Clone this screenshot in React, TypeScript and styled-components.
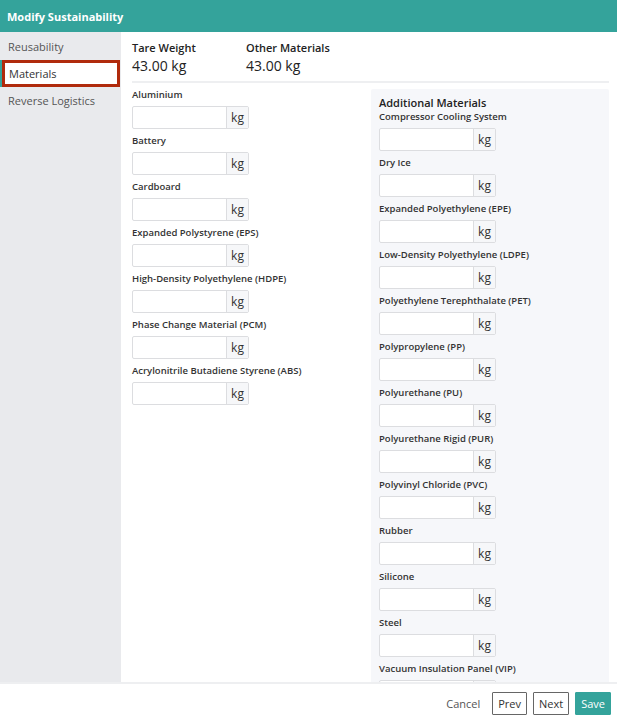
import styled, { createGlobalStyle } from "styled-components";

const GlobalStyle = createGlobalStyle`
  html, body {
    margin: 0;
    padding: 0;
    background: #fff;
  }
  body {
    font-family: "Open Sans", "Noto Sans", sans-serif;
    color: #333;
  }
  * {
    box-sizing: border-box;
  }
`;

const mainMaterials = [
  "Aluminium",
  "Battery",
  "Cardboard",
  "Expanded Polystyrene (EPS)",
  "High-Density Polyethylene (HDPE)",
  "Phase Change Material (PCM)",
  "Acrylonitrile Butadiene Styrene (ABS)",
];

const additionalMaterials = [
  "Compressor Cooling System",
  "Dry Ice",
  "Expanded Polyethylene (EPE)",
  "Low-Density Polyethylene (LDPE)",
  "Polyethylene Terephthalate (PET)",
  "Polypropylene (PP)",
  "Polyurethane (PU)",
  "Polyurethane Rigid (PUR)",
  "Polyvinyl Chloride (PVC)",
  "Rubber",
  "Silicone",
  "Steel",
  "Vacuum Insulation Panel (VIP)",
];

const navItems = ["Reusability", "Materials", "Reverse Logistics"];

function WeightField({ label }: { label: string }) {
  return (
    <Field>
      <span className="label">{label}</span>
      <InputGroup>
        <input type="text" />
        <span className="addon">kg</span>
      </InputGroup>
    </Field>
  );
}

export default function App() {
  return (
    <Modal>
      <GlobalStyle />
      <Header>Modify Sustainability</Header>
      <Body>
        <Sidebar>
          {navItems.map((item) => (
            <NavItem key={item} $active={item === "Materials"}>
              {item}
            </NavItem>
          ))}
        </Sidebar>
        <Content>
          <Summary>
            <div className="stat">
              <span className="stat-label">Tare Weight</span>
              <span className="stat-value">43.00 kg</span>
            </div>
            <div className="stat">
              <span className="stat-label">Other Materials</span>
              <span className="stat-value">43.00 kg</span>
            </div>
          </Summary>
          <Columns>
            <Column>
              {mainMaterials.map((m) => (
                <WeightField key={m} label={m} />
              ))}
            </Column>
            <Panel>
              <h3>Additional Materials</h3>
              {additionalMaterials.map((m) => (
                <WeightField key={m} label={m} />
              ))}
            </Panel>
          </Columns>
        </Content>
      </Body>
      <Footer>
        <LinkButton>Cancel</LinkButton>
        <Button>Prev</Button>
        <Button>Next</Button>
        <Button $primary>Save</Button>
      </Footer>
    </Modal>
  );
}

const Modal = styled.div`
  display: flex;
  flex-direction: column;
  width: 617px;
  height: 722px;
  overflow: hidden;
`;

const Header = styled.div`
  display: flex;
  align-items: center;
  height: 32px;
  padding: 0 7px;
  background: #34a39b;
  color: #fff;
  font-size: 11px;
  font-weight: 700;
`;

const Body = styled.div`
  display: flex;
  flex: 1;
  min-height: 0;
`;

const Sidebar = styled.div`
  width: 121px;
  flex-shrink: 0;
  padding-top: 1px;
  background: #e9eaed;
`;

const NavItem = styled.div<{ $active?: boolean }>`
  display: flex;
  align-items: center;
  height: 27px;
  padding-left: 8px;
  font-size: 11px;
  color: #555;

  ${({ $active }) =>
    $active &&
    `
    position: relative;
    margin-left: 2px;
    margin-right: 1px;
    padding-left: 4px;
    background: #fff;
    color: #333;
    border: 3px solid #b02a0c;

    &::before {
      content: "";
      position: absolute;
      left: -5px;
      top: -3px;
      bottom: -3px;
      width: 2px;
      background: #34a39b;
    }
  `}
`;

const Content = styled.div`
  flex: 1;
  min-width: 0;
  padding: 8px 8px 0 11px;
  overflow: hidden;
`;

const Summary = styled.div`
  display: flex;
  padding-bottom: 4px;
  border-bottom: 2px solid #eeeff1;

  .stat {
    display: flex;
    flex-direction: column;
    width: 114px;
  }

  .stat-label {
    font-size: 11px;
    font-weight: 600;
    line-height: 15px;
    color: #222;
  }

  .stat-value {
    font-size: 14px;
    line-height: 22px;
    color: #222;
  }
`;

const Columns = styled.div`
  display: flex;
  margin-top: 6px;
`;

const Column = styled.div`
  width: 239px;
  flex-shrink: 0;
`;

const Panel = styled.div`
  flex: 1;
  padding: 5px 8px 0;
  background: #f6f7fa;
  border-radius: 2px;

  h3 {
    margin: 0;
    font-size: 11px;
    font-weight: 600;
    line-height: 17px;
    color: #222;
  }
`;

const Field = styled.div`
  display: flex;
  flex-direction: column;
  align-items: flex-start;
  margin-bottom: 6px;

  .label {
    font-size: 9.5px;
    font-weight: 600;
    line-height: 12px;
    margin-bottom: 5px;
    color: #333;
  }
`;

const InputGroup = styled.div`
  display: flex;
  width: 117px;
  height: 23px;
  border: 1px solid #dcdde0;
  border-radius: 2px;
  background: #fff;

  input {
    flex: 1;
    min-width: 0;
    border: none;
    outline: none;
    background: transparent;
  }

  .addon {
    display: flex;
    align-items: center;
    justify-content: center;
    width: 22px;
    border-left: 1px solid #dcdde0;
    background: #f6f7f9;
    font-size: 12px;
    color: #333;
  }
`;

const Footer = styled.div`
  display: flex;
  align-items: center;
  justify-content: flex-end;
  gap: 6px;
  height: 40px;
  padding: 0 6px 0 0;
  border-top: 2px solid #eeeff1;
  background: #fff;
`;

const LinkButton = styled.span`
  margin-right: 6px;
  font-size: 11px;
  color: #555;
`;

const Button = styled.button<{ $primary?: boolean }>`
  height: 23px;
  padding: 0 5px;
  border: 1px solid ${({ $primary }) => ($primary ? "#34a39b" : "#666")};
  border-radius: 1px;
  background: ${({ $primary }) => ($primary ? "#34a39b" : "#fff")};
  color: ${({ $primary }) => ($primary ? "#fff" : "#333")};
  font-family: "Open Sans", "Noto Sans", sans-serif;
  font-size: 11px;
  line-height: 1;
  cursor: pointer;
`;
